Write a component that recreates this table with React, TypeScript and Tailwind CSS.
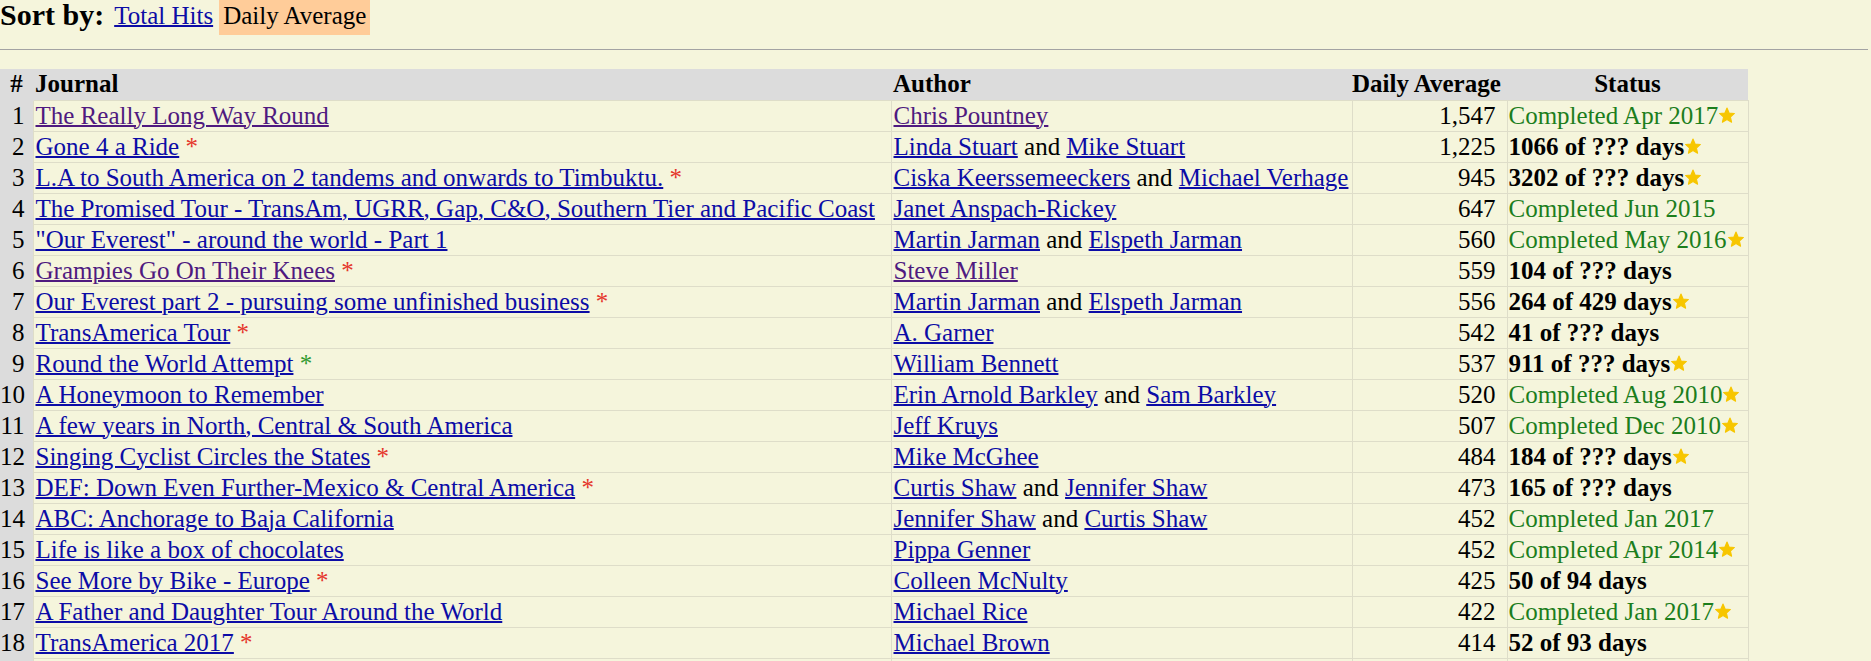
import React from 'react'

type Person = { name: string; visited?: boolean }
type Row = {
  title: string
  visited?: boolean
  mark?: 'red' | 'green'
  authors: Person[]
  avg: string
  status: string
  done: boolean
  star?: boolean
}

const rows: Row[] = [
  { title: 'The Really Long Way Round', visited: true, authors: [{ name: 'Chris Pountney', visited: true }], avg: '1,547', status: 'Completed Apr 2017', done: true, star: true },
  { title: 'Gone 4 a Ride', mark: 'red', authors: [{ name: 'Linda Stuart' }, { name: 'Mike Stuart' }], avg: '1,225', status: '1066 of ??? days', done: false, star: true },
  { title: 'L.A to South America on 2 tandems and onwards to Timbuktu.', mark: 'red', authors: [{ name: 'Ciska Keerssemeeckers' }, { name: 'Michael Verhage' }], avg: '945', status: '3202 of ??? days', done: false, star: true },
  { title: 'The Promised Tour - TransAm, UGRR, Gap, C&O, Southern Tier and Pacific Coast', authors: [{ name: 'Janet Anspach-Rickey' }], avg: '647', status: 'Completed Jun 2015', done: true },
  { title: '"Our Everest" - around the world - Part 1', authors: [{ name: 'Martin Jarman' }, { name: 'Elspeth Jarman' }], avg: '560', status: 'Completed May 2016', done: true, star: true },
  { title: 'Grampies Go On Their Knees', visited: true, mark: 'red', authors: [{ name: 'Steve Miller', visited: true }], avg: '559', status: '104 of ??? days', done: false },
  { title: 'Our Everest part 2 - pursuing some unfinished business', mark: 'red', authors: [{ name: 'Martin Jarman' }, { name: 'Elspeth Jarman' }], avg: '556', status: '264 of 429 days', done: false, star: true },
  { title: 'TransAmerica Tour', mark: 'red', authors: [{ name: 'A. Garner' }], avg: '542', status: '41 of ??? days', done: false },
  { title: 'Round the World Attempt', mark: 'green', authors: [{ name: 'William Bennett' }], avg: '537', status: '911 of ??? days', done: false, star: true },
  { title: 'A Honeymoon to Remember', authors: [{ name: 'Erin Arnold Barkley' }, { name: 'Sam Barkley' }], avg: '520', status: 'Completed Aug 2010', done: true, star: true },
  { title: 'A few years in North, Central & South America', authors: [{ name: 'Jeff Kruys' }], avg: '507', status: 'Completed Dec 2010', done: true, star: true },
  { title: 'Singing Cyclist Circles the States', mark: 'red', authors: [{ name: 'Mike McGhee' }], avg: '484', status: '184 of ??? days', done: false, star: true },
  { title: 'DEF: Down Even Further-Mexico & Central America', mark: 'red', authors: [{ name: 'Curtis Shaw' }, { name: 'Jennifer Shaw' }], avg: '473', status: '165 of ??? days', done: false },
  { title: 'ABC: Anchorage to Baja California', authors: [{ name: 'Jennifer Shaw' }, { name: 'Curtis Shaw' }], avg: '452', status: 'Completed Jan 2017', done: true },
  { title: 'Life is like a box of chocolates', authors: [{ name: 'Pippa Genner' }], avg: '452', status: 'Completed Apr 2014', done: true, star: true },
  { title: 'See More by Bike - Europe', mark: 'red', authors: [{ name: 'Colleen McNulty' }], avg: '425', status: '50 of 94 days', done: false },
  { title: 'A Father and Daughter Tour Around the World', authors: [{ name: 'Michael Rice' }], avg: '422', status: 'Completed Jan 2017', done: true, star: true },
  { title: 'TransAmerica 2017', mark: 'red', authors: [{ name: 'Michael Brown' }], avg: '414', status: '52 of 93 days', done: false },
]

function Star() {
  return (
    <svg viewBox="0 0 24 24" className="inline-block w-[18px] h-[17px] align-baseline">
      <polygon
        points="12,1.5 15,8.4 22.5,9.1 16.8,14.1 18.5,21.5 12,17.6 5.5,21.5 7.2,14.1 1.5,9.1 9,8.4"
        fill="#f7c600"
        stroke="#f7c600"
        strokeWidth="1.5"
        strokeLinejoin="round"
      />
    </svg>
  )
}

function Link({ children, visited }: { children: React.ReactNode; visited?: boolean }) {
  return (
    <a
      href="#"
      className={
        visited
          ? 'text-[#4f1a80] underline decoration-[1.5px]'
          : 'text-[#0c0ca6] underline decoration-[1.5px]'
      }
    >
      {children}
    </a>
  )
}

export default function App() {
  return (
    <div className="min-h-screen bg-[#f5f5dc] text-black [font-family:'Liberation_Serif','Times_New_Roman',serif] text-[25px] pr-[3px]">
      {/* Sort bar */}
      <div className="flex items-start h-[35px]">
        <span className="font-bold text-[30px] leading-none">Sort by:</span>
        <span className="ml-[10px] pt-[2px] leading-[28px]">
          <Link>Total Hits</Link>
        </span>
        <span className="ml-[6px] bg-[#ffcc99] px-[4px] pt-[2px] h-[35px] leading-[28px]">Daily Average</span>
      </div>

      <div className="mt-[14px] border-t border-[#a3a3a3]" />

      {/* Journals */}
      <table className="mt-[19px] table-fixed w-[1748px] border-collapse leading-[28px]">
        <colgroup>
          <col className="w-[33px]" />
          <col className="w-[858px]" />
          <col className="w-[461px]" />
          <col className="w-[155px]" />
          <col className="w-[241px]" />
        </colgroup>
        <thead>
          <tr className="h-[31px] bg-[#dcdcdc]">
            <th className="p-0 text-center">#</th>
            <th className="p-0 pl-[2px] text-left">Journal</th>
            <th className="p-0 pl-[2px] text-left">Author</th>
            <th className="p-0 text-left whitespace-nowrap">Daily Average</th>
            <th className="p-0 text-center">Status</th>
          </tr>
        </thead>
        <tbody>
          {rows.map((r, i) => (
            <tr key={i} className="h-[31px]">
              <td className="p-0 pr-[8px] text-right bg-[#dcdcdc] border-t border-[#dcdcdc]">{i + 1}</td>
              <td className="p-0 pl-[2px] border border-[#deddc9] whitespace-nowrap">
                <Link visited={r.visited}>{r.title}</Link>
                {r.mark === 'red' && <span className="text-[#e5352b]"> *</span>}
                {r.mark === 'green' && <span className="text-[#2f9a2f]"> *</span>}
              </td>
              <td className="p-0 pl-[2px] border border-[#deddc9] whitespace-nowrap">
                {r.authors.map((a, j) => (
                  <React.Fragment key={j}>
                    {j > 0 && ' and '}
                    <Link visited={a.visited}>{a.name}</Link>
                  </React.Fragment>
                ))}
              </td>
              <td className="p-0 pr-[11px] text-right border border-[#deddc9]">{r.avg}</td>
              <td className="p-0 pl-[1px] border border-[#deddc9] whitespace-nowrap">
                <span className={r.done ? 'text-[#1c7e1c]' : 'font-bold'}>{r.status}</span>
                {r.star && <Star />}
              </td>
            </tr>
          ))}
          <tr className="h-[31px]">
            <td className="p-0 bg-[#dcdcdc]" />
            <td className="p-0 border border-[#deddc9]" />
            <td className="p-0 border border-[#deddc9]" />
            <td className="p-0 border border-[#deddc9]" />
            <td className="p-0 border border-[#deddc9]" />
          </tr>
        </tbody>
      </table>
    </div>
  )
}
